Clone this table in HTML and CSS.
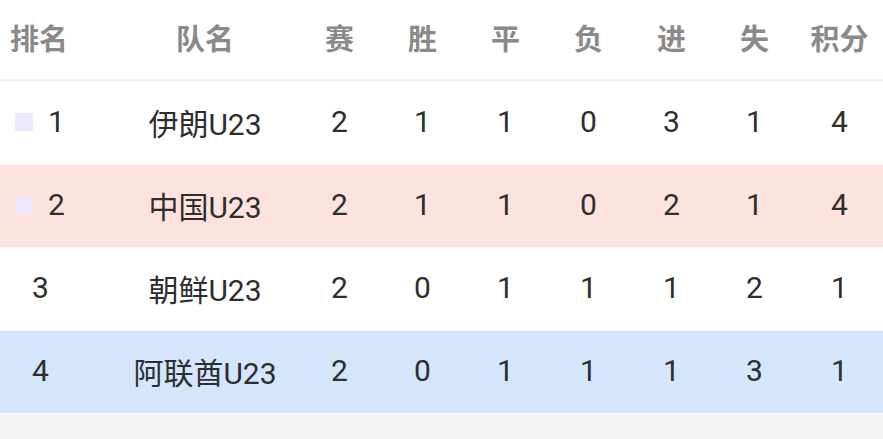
FILE: index.html
```html
<!DOCTYPE html>
<html lang="zh-CN">
<head>
<meta charset="utf-8">
<link rel="stylesheet" href="styles.css">
</head>
<body>
<div class="table">
  <div class="row head">
    <div class="cell rank">排名</div>
    <div class="cell">队名</div>
    <div class="cell">赛</div>
    <div class="cell">胜</div>
    <div class="cell">平</div>
    <div class="cell">负</div>
    <div class="cell">进</div>
    <div class="cell">失</div>
    <div class="cell">积分</div>
  </div>
  <div class="row">
    <div class="cell rank"><span class="mark"></span>1</div>
    <div class="cell">伊朗U23</div>
    <div class="cell">2</div><div class="cell">1</div><div class="cell">1</div><div class="cell">0</div><div class="cell">3</div><div class="cell">1</div><div class="cell">4</div>
  </div>
  <div class="row pink">
    <div class="cell rank"><span class="mark"></span>2</div>
    <div class="cell">中国U23</div>
    <div class="cell">2</div><div class="cell">1</div><div class="cell">1</div><div class="cell">0</div><div class="cell">2</div><div class="cell">1</div><div class="cell">4</div>
  </div>
  <div class="row">
    <div class="cell rank plain">3</div>
    <div class="cell">朝鲜U23</div>
    <div class="cell">2</div><div class="cell">0</div><div class="cell">1</div><div class="cell">1</div><div class="cell">1</div><div class="cell">2</div><div class="cell">1</div>
  </div>
  <div class="row blue">
    <div class="cell rank plain">4</div>
    <div class="cell">阿联酋U23</div>
    <div class="cell">2</div><div class="cell">0</div><div class="cell">1</div><div class="cell">1</div><div class="cell">1</div><div class="cell">3</div><div class="cell">1</div>
  </div>
</div>
</body>
</html>
```
FILE: styles.css
```css
html, body {
  margin: 0;
  padding: 0;
}
body {
  background: #f2f2f2;
  font-family: Roboto, "Noto Sans CJK SC", sans-serif;
  color: #2e2e2e;
  font-size: 30px;
}
.table {
  background: #fff;
}
.row {
  display: grid;
  grid-template-columns: 112px 186px repeat(6, 83px) 87px;
  height: 83px;
  align-items: center;
  box-sizing: border-box;
  padding-bottom: 3px;
  border-bottom: 1px solid #f7f7f7;
}
.row.head {
  height: 82px;
  padding-bottom: 6px;
  border-bottom: 3px solid #f2f2f2;
  color: #8a8a8a;
  font-weight: bold;
  font-size: 29px;
  font-family: "Noto Sans CJK SC", sans-serif;
}
.cell {
  text-align: center;
  white-space: nowrap;
}
.rank {
  text-align: left;
  display: flex;
  align-items: center;
  padding-left: 15px;
}
.head .rank {
  padding-left: 10px;
}
.rank.plain {
  padding-left: 32px;
}
.mark {
  width: 18px;
  height: 18px;
  background: #ece7fb;
  margin-right: 15px;
  flex: none;
}
.pink {
  background: #fde3e0;
}
.blue {
  background: #d4e5fc;
}
```
